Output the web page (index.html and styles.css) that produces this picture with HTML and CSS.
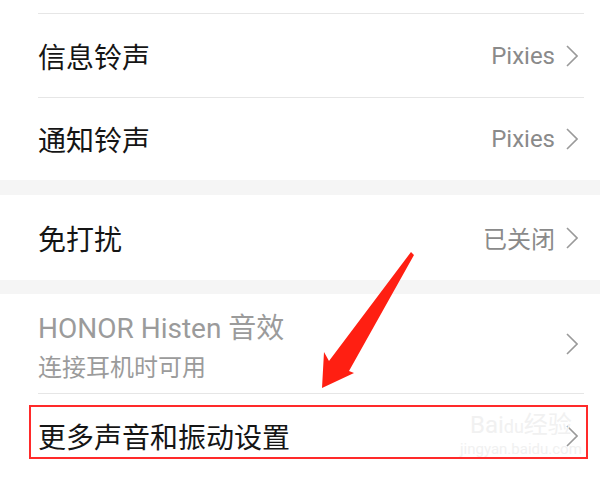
FILE: index.html
```html
<!DOCTYPE html>
<html lang="zh-CN">
<head>
    <meta charset="UTF-8">
    <title>声音设置</title>
    <link rel="stylesheet" href="styles.css">
</head>
<body>
    <div class="screen">
        <div class="top-gap"></div>
        <div class="divider"></div>

        <div class="row row-first">
            <span class="title">信息铃声</span>
            <span class="value">Pixies</span>
            <svg class="chevron" viewBox="0 0 12 22"><polyline points="1,1 11,11 1,21"/></svg>
        </div>
        <div class="divider"></div>
        <div class="row row-second">
            <span class="title">通知铃声</span>
            <span class="value">Pixies</span>
            <svg class="chevron" viewBox="0 0 12 22"><polyline points="1,1 11,11 1,21"/></svg>
        </div>

        <div class="band"></div>

        <div class="row row-mid">
            <span class="title">免打扰</span>
            <span class="value">已关闭</span>
            <svg class="chevron" viewBox="0 0 12 22"><polyline points="1,1 11,11 1,21"/></svg>
        </div>

        <div class="band band-thin"></div>

        <div class="row row-double">
            <div class="texts">
                <span class="title muted">HONOR Histen 音效</span>
                <span class="subtitle">连接耳机时可用</span>
            </div>
            <svg class="chevron" viewBox="0 0 12 22"><polyline points="1,1 11,11 1,21"/></svg>
        </div>
        <div class="divider"></div>
        <div class="row row-last">
            <span class="title">更多声音和振动设置</span>
            <svg class="chevron" viewBox="0 0 12 22"><polyline points="1,1 11,11 1,21"/></svg>
        </div>

        <!-- annotation -->
        <div class="highlight"></div>
        <svg class="arrow" viewBox="0 0 600 482">
            <polygon points="411,252 414,255 349,371 354,373 322,388 324,352 329,361"/>
        </svg>
        <div class="watermark">
            <span class="wm-logo">Bai<span class="wm-du">du</span>经验</span>
            <span class="wm-url">jingyan.baidu.com</span>
        </div>
    </div>
</body>
</html>
```

FILE: styles.css
```css
body {
    margin: 0;
    background-color: #ffffff;
    font-family: Roboto, "Noto Sans CJK SC", sans-serif;
}
.screen {
    position: relative;
    width: 600px;
    height: 482px;
    overflow: hidden;
    background-color: #ffffff;
}
.top-gap {
    height: 13px;
}
.divider {
    height: 1px;
    margin: 0 16px 0 38px;
    background-color: #e6e6e6;
}
.band {
    height: 15px;
    background-color: #f5f5f5;
}
.band-thin {
    height: 14px;
}
.row {
    display: flex;
    align-items: center;
    padding: 0 22px 0 38px;
}
.row-first {
    height: 83px;
}
.row-second {
    height: 82px;
}
.row-mid {
    height: 85px;
}
.row-double {
    height: 99px;
}
.row-last {
    height: 87px;
    padding-bottom: 3px;
    box-sizing: border-box;
}
.title {
    flex: 1;
    font-size: 28px;
    color: #151515;
}
.value {
    font-size: 24px;
    color: #8a8a8a;
    margin-right: 11px;
}
.texts {
    flex: 1;
    display: flex;
    flex-direction: column;
    gap: 2px;
    padding-top: 1px;
}
.muted {
    font-size: 28px;
    color: #9b9b9b;
}
.subtitle {
    font-size: 24px;
    color: #9b9b9b;
}
.chevron {
    width: 12px;
    height: 22px;
    fill: none;
    stroke: #9a9a9a;
    stroke-width: 1.6;
}
.highlight {
    position: absolute;
    left: 29px;
    top: 405px;
    width: 555px;
    height: 50px;
    border: 2px solid #ff2a2a;
}
.arrow {
    position: absolute;
    left: 0;
    top: 0;
    width: 600px;
    height: 482px;
    fill: #ff1f12;
    pointer-events: none;
}
.watermark {
    position: absolute;
    left: 460px;
    top: 412px;
    display: flex;
    flex-direction: column;
    align-items: center;
    color: #f1f1f1;
    pointer-events: none;
}
.wm-logo {
    font-size: 24px;
    line-height: 26px;
}
.wm-du {
    font-size: 18px;
}
.wm-url {
    font-size: 15px;
    line-height: 18px;
}
```
